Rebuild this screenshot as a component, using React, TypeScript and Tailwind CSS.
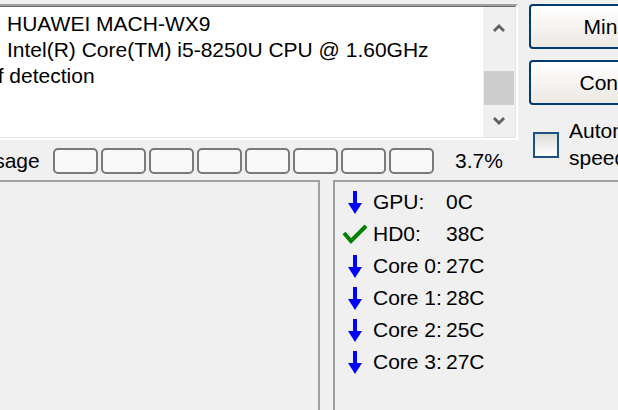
import React from "react";

const rows = [
  { icon: "down", label: "GPU:", value: "0C" },
  { icon: "ok", label: "HD0:", value: "38C" },
  { icon: "down", label: "Core 0:", value: "27C" },
  { icon: "down", label: "Core 1:", value: "28C" },
  { icon: "down", label: "Core 2:", value: "25C" },
  { icon: "down", label: "Core 3:", value: "27C" },
];

const DownArrow = () => (
  <svg width="14" height="23" viewBox="0 0 14 23">
    <path d="M5 0h4v12h5l-7 11l-7-11h5z" fill="#0000ff" />
  </svg>
);

const Check = () => (
  <svg width="26" height="20" viewBox="0 0 26 20">
    <polyline points="2,9 9,17 24,2" fill="none" stroke="#008000" strokeWidth="4" />
  </svg>
);

const Chevron = ({ up }: { up?: boolean }) => (
  <svg width="12" height="8" viewBox="0 0 12 8">
    <path
      d={up ? "M0 6l6-6l6 6l-2 2l-4-4l-4 4z" : "M0 2l6 6l6-6l-2-2l-4 4l-4-4z"}
      fill="#606060"
    />
  </svg>
);

const App: React.FC = () => {
  return (
    <div className="w-[618px] h-[410px] bg-[#f0f0f0] overflow-hidden font-['Liberation_Sans',Arial,sans-serif] text-[21px] text-black">
      {/* top: info box + buttons */}
      <div className="flex items-start h-[140px] pt-[4px]">
        <div className="w-[518px] h-[136px] shrink-0 border-t-2 border-r-2 border-b-2 border-t-[#a0a0a0] border-r-white border-b-white">
          <div className="h-full flex border-t border-r border-b border-t-[#696969] border-r-[#e3e3e3] border-b-[#e3e3e3]">
            <div className="flex-1 bg-white overflow-hidden leading-[26px] pt-[4px]">
              <div className="pl-[7px] whitespace-nowrap">HUAWEI MACH-WX9</div>
              <div className="pl-[7px] whitespace-nowrap">Intel(R) Core(TM) i5-8250U CPU @ 1.60GHz</div>
              <div className="ml-[-14px] whitespace-nowrap">of detection</div>
            </div>
            <div className="w-[32px] bg-[#f0f0f0] flex flex-col items-center">
              <div className="h-[42px] flex items-center justify-center">
                <Chevron up />
              </div>
              <div className="h-[22px]" />
              <div className="w-[30px] h-[34px] bg-[#cdcdcd]" />
              <div className="flex-1 flex items-center justify-center">
                <Chevron />
              </div>
            </div>
          </div>
        </div>

        <div className="ml-[11px] flex flex-col">
          <button className="w-[192px] h-[45px] shrink-0 rounded-[4px] border-2 border-[#003c74] bg-gradient-to-b from-white to-[#ece9e4] text-center">
            Minimize
          </button>
          <button className="mt-[11px] w-[192px] h-[45px] shrink-0 rounded-[4px] border-2 border-[#003c74] bg-gradient-to-b from-white to-[#ece9e4] text-center">
            Configure
          </button>
          <div className="flex items-start mt-[12px] ml-[4px]">
            <div className="mt-[15px] w-[26px] h-[26px] border-2 border-[#1c5180] bg-gradient-to-b from-[#dcdcd7] to-white shrink-0" />
            <div className="ml-[10px] leading-[27px] whitespace-nowrap">
              <div>Automatic</div>
              <div>speed</div>
            </div>
          </div>
        </div>
      </div>

      {/* usage meter */}
      <div className="flex items-center mt-[8px] h-[26px]">
        <span className="ml-[-21px] w-[74px] whitespace-nowrap">Usage</span>
        <div className="flex gap-[3px]">
          {Array.from({ length: 8 }).map((_, i) => (
            <div
              key={i}
              className="w-[45px] h-[26px] rounded-[5px] border-2 border-[#7a7a7a] bg-[#f8f8f8]"
            />
          ))}
        </div>
        <span className="ml-[21px]">3.7%</span>
      </div>

      {/* bottom panels */}
      <div className="flex mt-[6px] h-[240px]">
        <div className="w-[320px] shrink-0 border-t-2 border-r-2 border-[#a0a0a0]" />
        <div className="ml-[13px] flex-1 border-t-2 border-l-2 border-[#a0a0a0] pt-[4px]">
          {rows.map((r) => (
            <div key={r.label} className="flex items-center h-[32px]">
              <div className="w-[36px] ml-[2px] flex justify-center">
                {r.icon === "down" ? <DownArrow /> : <Check />}
              </div>
              <span className="w-[73px] whitespace-nowrap">{r.label}</span>
              <span>{r.value}</span>
            </div>
          ))}
        </div>
      </div>
    </div>
  );
};

export default App;
